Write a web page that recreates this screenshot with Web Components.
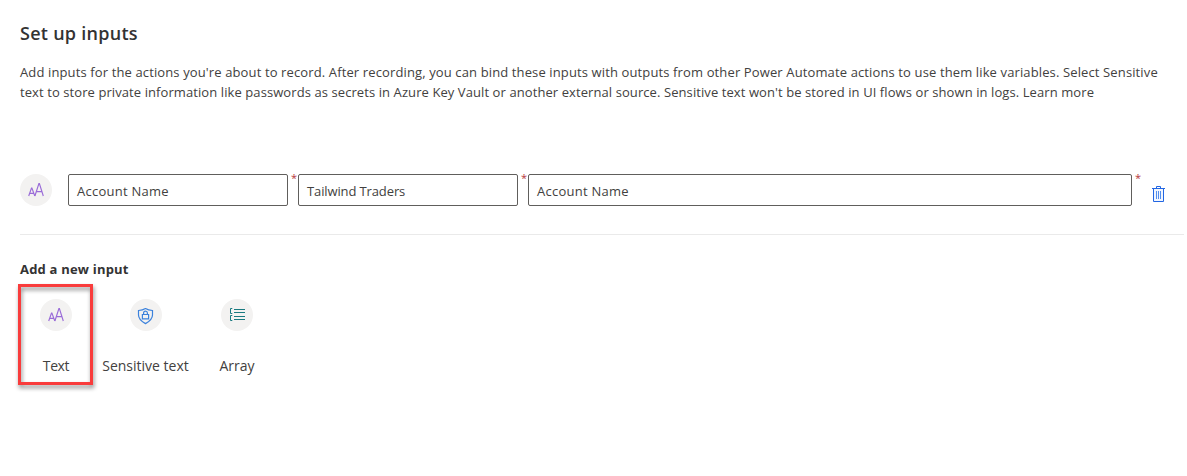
<!DOCTYPE html>
<html lang="en">
<head>
<meta charset="utf-8">
<title>Set up inputs</title>
<style>
html,body{margin:0;background:#fff}
body{font-family:"Open Sans","Noto Sans",sans-serif;color:#424140;font-size:13px;height:476px;overflow:hidden}
</style>
</head>
<body>
<input-setup></input-setup>
<script>
const define = (name, html) => {
  const t = document.createElement('template');
  t.innerHTML = html;
  customElements.define(name, class extends HTMLElement {
    constructor() {
      super();
      this.attachShadow({mode: 'open'}).append(t.content.cloneNode(true));
    }
  });
};

const ICONS = {
  text: `<g stroke="#9a6cd8" stroke-width="1.15"><path d="M8.700 22L11.500 14h.4l2.900 8M9.800 19.400h4"/><path d="M14.900 22L18.900 9.500h.5L23.300 22M16.400 17.600h5.500"/></g>`,
  shield: `<g stroke="#3c82dc" stroke-width="1.2"><path d="M15.500 9.600c-2.100 1.300-4.500 1.800-7 1.900v4.500c0 3.900 3.200 6.500 7 8.600 3.800-2.100 7-4.700 7-8.600v-4.500c-2.500-.1-4.900-.6-7-1.900z"/><path d="M12.400 15.500h6.200v4.300h-6.200zM13.600 15.500v-1.400a1.900 1.900 0 0 1 3.800 0v1.400"/></g>`,
  list: `<g stroke="#197a80" stroke-width="1"><path d="M11.300 9.500H9.500v5h1.800M11.300 16.500H9.500v5h1.800M13 10.500h11M13 13.500h11M13 17.500h11M13 20.500h11"/></g>`
};

customElements.define('type-icon', class extends HTMLElement {
  connectedCallback() {
    this.attachShadow({mode: 'open'}).innerHTML = `<style>
      :host{display:block;flex:none;width:32px;height:32px;border-radius:50%;background:#f3f2f1}
      svg{display:block;fill:none;stroke-width:1}
      </style><svg width="32" height="32" viewBox="0 0 32 32">${ICONS[this.getAttribute('kind')]}</svg>`;
  }
});

define('text-box', `<style>
  :host{display:flex;box-sizing:border-box;height:32px;border:1px solid #605e5c;border-radius:2px;
    padding:0 8px;align-items:center;position:relative;background:#fff;line-height:20px}
  .req{position:absolute;right:-10px;top:-6px;color:#b5363b;font-size:11px;line-height:18px;letter-spacing:0}
  .v{position:relative;top:1px}
  </style><span class="v"><slot></slot></span><span class="req">*</span>`);

define('input-row', `<style>
  :host{display:flex;align-items:flex-start;height:32px;padding:0 20px}
  type-icon{margin-right:16px}
  text-box{letter-spacing:.25px}
  .a,.b{width:220px;margin-right:10px}
  .b{letter-spacing:-.12px}
  .c{width:604px;margin-right:20px}
  svg{margin-top:11px;fill:none;stroke:#2266e3}
  </style><type-icon kind="text"></type-icon>
  <text-box class="a">Account Name</text-box>
  <text-box class="b">Tailwind Traders</text-box>
  <text-box class="c">Account Name</text-box>
  <svg width="13" height="17" viewBox="0 0 13 17"><path d="M1.500 3.500h10v13h-10z" fill="#f1f6ff"/><path d="M0 3.500h13M4.500 3V1.500h4V3"/><path stroke="#5590ee" d="M4.500 6v8M6.500 6v8M8.500 6v8"/></svg>`);

define('type-card', `<style>
  :host{display:flex;flex-direction:column;align-items:center;box-sizing:border-box;height:100px;padding-top:15px}
  .label{margin-top:25px;font-size:14px;line-height:20px;white-space:nowrap}
  :host([selected]){position:relative}
  :host([selected]) .label{letter-spacing:-.4px}
  :host([selected])::after{content:"";position:absolute;inset:0 -1px -1px -2px;border:3px solid #f93c3c;
    filter:drop-shadow(1px 3px 2px rgba(0,0,0,.45))}
  </style><slot name="icon"></slot><span class="label"><slot></slot></span>`);

define('input-setup', `<style>
  :host{display:block;padding-top:20px}
  h1{margin:0 20px;font-size:18px;line-height:26px;font-weight:600;letter-spacing:.27px;color:#333}
  p{margin:16px 0 0 20px;line-height:20px;white-space:nowrap}
  p span{display:block;width:max-content}
  .l1{letter-spacing:.125px}
  .l2{letter-spacing:.085px}
  input-row{margin-top:72px}
  hr{margin:28px 3px 0 20px;border:0;height:1px;background:#eaeaea}
  h2{margin:24px 20px 0;font-size:13px;line-height:20px;font-weight:700;letter-spacing:.2px;color:#333}
  .types{display:flex;margin:5px 0 0 20px}
  .t{width:72px}.s{width:107px}.r{width:76px}
  </style>
  <h1>Set up inputs</h1>
  <p><span class="l1">Add inputs for the actions you're about to record. After recording, you can bind these inputs with outputs from other Power Automate actions to use them like variables. Select Sensitive</span><span class="l2">text to store private information like passwords as secrets in Azure Key Vault or another external source. Sensitive text won't be stored in UI flows or shown in logs. Learn more</span></p>
  <input-row></input-row>
  <hr>
  <h2>Add a new input</h2>
  <div class="types">
    <type-card class="t" selected><type-icon slot="icon" kind="text"></type-icon>Text</type-card>
    <type-card class="s"><type-icon slot="icon" kind="shield"></type-icon>Sensitive text</type-card>
    <type-card class="r"><type-icon slot="icon" kind="list"></type-icon>Array</type-card>
  </div>`);
</script>
</body>
</html>
